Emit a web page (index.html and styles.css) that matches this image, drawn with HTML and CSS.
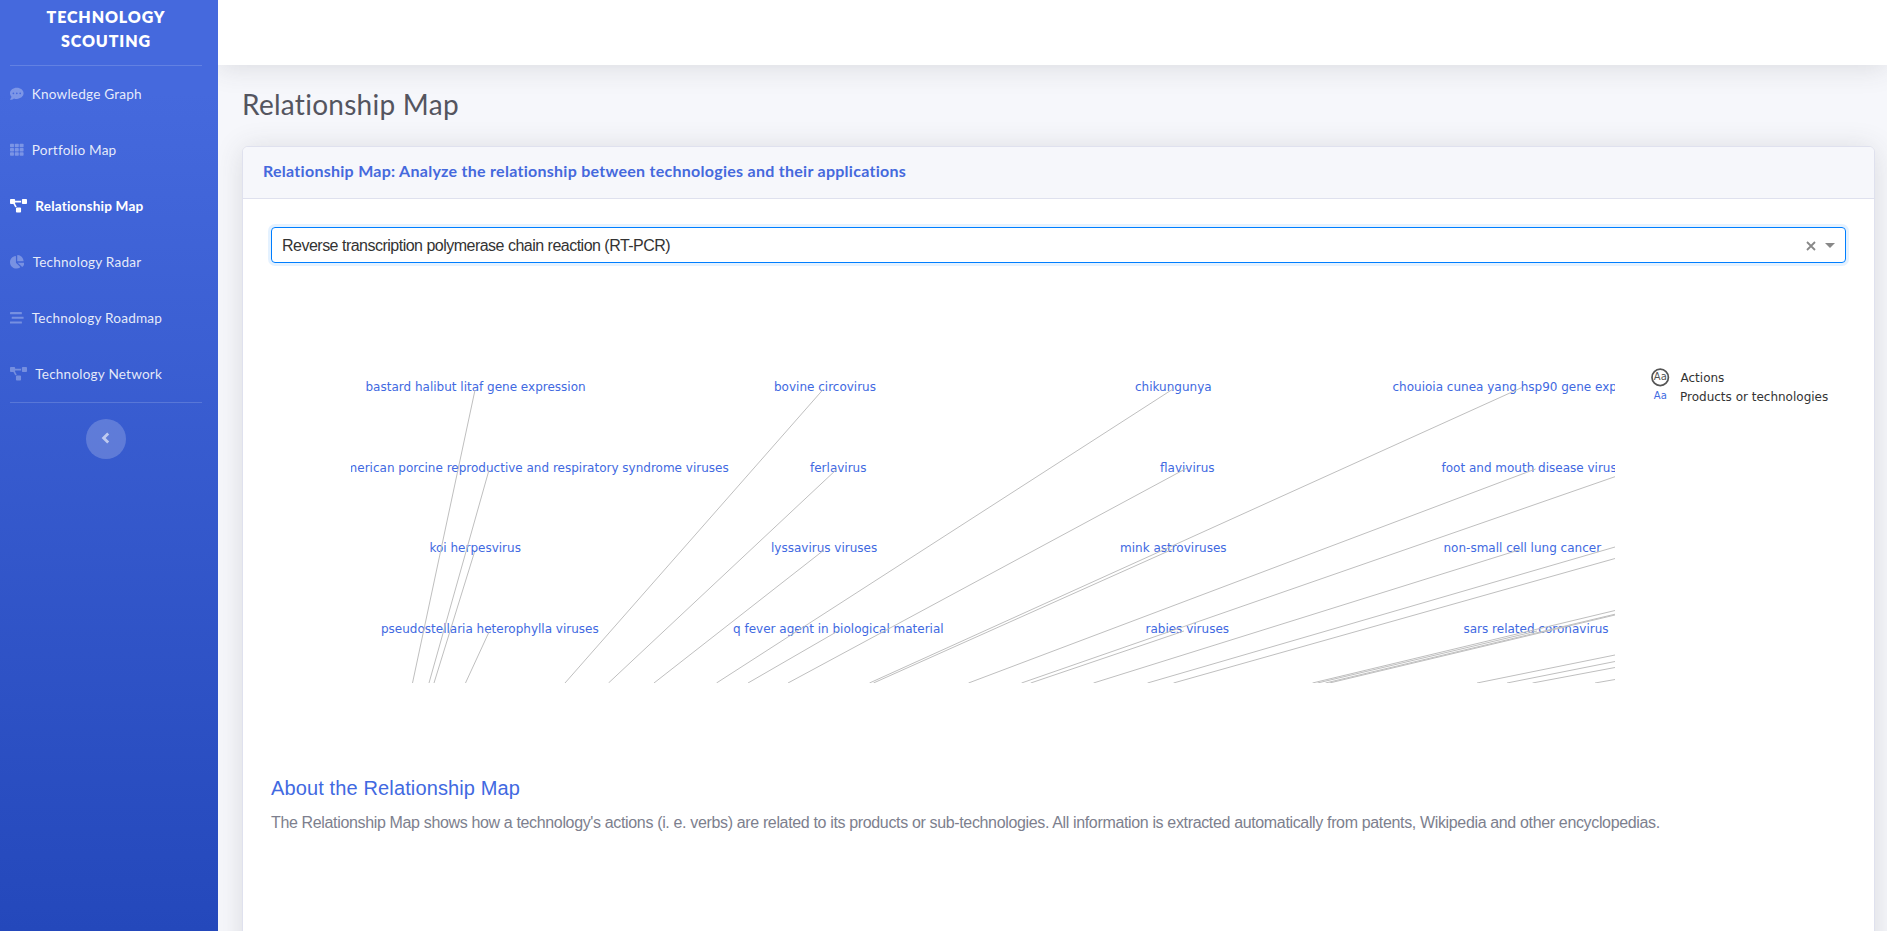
FILE: index.html
```
<!DOCTYPE html>
<html lang="en">
<head>
<meta charset="utf-8">
<title>Technology Scouting</title>
<link rel="stylesheet" href="styles.css">
</head>
<body>
<div class="app">
  <nav class="sidebar">
    <div class="brand">TECHNOLOGY<br>SCOUTING</div>
    <hr class="divider">
    <a class="nav-item"><svg class="icon" width="13.6" height="13.6" viewBox="0 0 512 512"><path d="M256 32C114.6 32 0 125.1 0 240c0 49.6 21.4 95 57 130.7C44.5 421.1 2.7 466 2.2 466.5c-2.2 2.3-2.8 5.7-1.5 8.7S4.8 480 8 480c66.3 0 116-31.8 140.6-51.4 32.7 12.3 69 19.4 107.4 19.4 141.4 0 256-93.1 256-208S397.4 32 256 32zM128 272a32 32 0 1 1 0-64 32 32 0 0 1 0 64zm128 0a32 32 0 1 1 0-64 32 32 0 0 1 0 64zm128 0a32 32 0 1 1 0-64 32 32 0 0 1 0 64z"/></svg><span>Knowledge Graph</span></a>
    <a class="nav-item"><svg class="icon" width="13.6" height="13.6" viewBox="0 0 512 512"><rect x="0" y="32" width="149" height="128" rx="24"/><rect x="181" y="32" width="150" height="128" rx="24"/><rect x="363" y="32" width="149" height="128" rx="24"/><rect x="0" y="192" width="149" height="128" rx="24"/><rect x="181" y="192" width="150" height="128" rx="24"/><rect x="363" y="192" width="149" height="128" rx="24"/><rect x="0" y="352" width="149" height="128" rx="24"/><rect x="181" y="352" width="150" height="128" rx="24"/><rect x="363" y="352" width="149" height="128" rx="24"/></svg><span>Portfolio Map</span></a>
    <a class="nav-item active"><svg class="icon" width="17" height="13.6" viewBox="0 0 640 512"><path d="M384 320H256c-17.67 0-32 14.33-32 32v128c0 17.67 14.33 32 32 32h128c17.67 0 32-14.33 32-32V352c0-17.67-14.33-32-32-32zM192 32c0-17.67-14.33-32-32-32H32C14.33 0 0 14.33 0 32v128c0 17.67 14.33 32 32 32h95.72l73.16 128.04C211.98 300.98 232.4 288 256 288h.28L192 175.51V128h224V64H192V32zM608 0H480c-17.67 0-32 14.33-32 32v128c0 17.67 14.33 32 32 32h128c17.67 0 32-14.33 32-32V32c0-17.67-14.33-32-32-32z"/></svg><span>Relationship Map</span></a>
    <a class="nav-item"><svg class="icon" width="14.45" height="13.6" viewBox="0 0 544 512"><path d="M527.79 288H290.5l158.03 158.03c6.04 6.04 15.98 6.53 22.19.68 38.7-36.46 65.32-85.61 73.13-140.86 1.34-9.46-6.51-17.85-16.06-17.85zm-15.83-64.8C503.72 103.74 408.26 8.28 288.8.04 279.68-.59 272 7.1 272 16.24V240h223.77c9.14 0 16.82-7.68 16.19-16.8zM224 288V50.71c0-9.55-8.39-17.4-17.84-16.06C86.99 51.49-4.1 155.6.14 280.37 4.5 408.51 114.83 513.59 243.03 511.98c50.4-.63 96.97-16.87 135.26-44.03 7.9-5.6 8.42-17.23 1.57-24.08L224 288z"/></svg><span>Technology Radar</span></a>
    <a class="nav-item"><svg class="icon" width="13.6" height="13.6" viewBox="0 0 512 512"><rect x="0" y="40" width="448" height="80" rx="14"/><rect x="64" y="216" width="448" height="80" rx="14"/><rect x="0" y="392" width="448" height="80" rx="14"/></svg><span>Technology Roadmap</span></a>
    <a class="nav-item"><svg class="icon" width="17" height="13.6" viewBox="0 0 640 512"><path d="M384 320H256c-17.67 0-32 14.33-32 32v128c0 17.67 14.33 32 32 32h128c17.67 0 32-14.33 32-32V352c0-17.67-14.33-32-32-32zM192 32c0-17.67-14.33-32-32-32H32C14.33 0 0 14.33 0 32v128c0 17.67 14.33 32 32 32h95.72l73.16 128.04C211.98 300.98 232.4 288 256 288h.28L192 175.51V128h224V64H192V32zM608 0H480c-17.67 0-32 14.33-32 32v128c0 17.67 14.33 32 32 32h128c17.67 0 32-14.33 32-32V32c0-17.67-14.33-32-32-32z"/></svg><span>Technology Network</span></a>
    <hr class="divider">
    <button class="toggle" aria-label="Collapse"><svg width="10" height="12" viewBox="0 0 10 12"><path d="M7.2 1.4L2.6 6l4.6 4.6" /></svg></button>
  </nav>
  <div class="main">
    <header class="topbar"></header>
    <div class="content">
      <h1 class="page-title">Relationship Map</h1>
      <section class="card">
        <h2 class="card-header">Relationship Map: Analyze the relationship between technologies and their applications</h2>
        <div class="card-body">
          <div class="select">
            <span class="select-value">Reverse transcription polymerase chain reaction (RT-PCR)</span>
            <svg class="clear" width="10" height="10" viewBox="0 0 10 10"><path d="M1 1l8 8M9 1l-8 8"/></svg>
            <svg class="arrow" width="10" height="5" viewBox="0 0 10 5"><path d="M0 0h10L5 5z"/></svg>
          </div>
          <div class="chart">
            <svg class="graph" width="1264" height="320" viewBox="351 363 1264 320">
              <g class="labels">
                <text x="365.5" y="391">bastard halibut litaf gene expression</text>
                <text x="774" y="391">bovine circovirus</text>
                <text x="1135" y="391">chikungunya</text>
                <text x="1392.5" y="391">chouioia cunea yang hsp90 gene expression</text>
                <text x="728.7" y="472" text-anchor="end">north american porcine reproductive and respiratory syndrome viruses</text>
                <text x="810" y="472">ferlavirus</text>
                <text x="1160" y="472">flavivirus</text>
                <text x="1441.5" y="472">foot and mouth disease virus</text>
                <text x="429.5" y="552">koi herpesvirus</text>
                <text x="771" y="552">lyssavirus viruses</text>
                <text x="1120" y="552">mink astroviruses</text>
                <text x="1443.5" y="552">non-small cell lung cancer</text>
                <text x="381" y="633">pseudostellaria heterophylla viruses</text>
                <text x="733" y="633">q fever agent in biological material</text>
                <text x="1145.5" y="633">rabies viruses</text>
                <text x="1463.5" y="633">sars related coronavirus</text>
              </g>
              <path class="edges" d="M475 390L412.5 683M489 470L429 683M474.5 552L434 683M489 632L465.5 683M823.5 389L565 683M837 469L608.5 683M824 550L654 683M1173 389L716.5 683M838 631L748 683M1187 468L788 683M1522 387.5L869.5 683M1173 549L873.5 683M1535.5 469L968.5 683M1615 476.7L1021.5 683M1184 631L1030.7 683M1522 549L1093.5 683M1615 547L1147.5 683M1615 558.5L1173.5 683M1615 610.5L1312.5 683M1537 631L1317.5 683M1615 614.2L1325.5 683M1615 615L1329.5 683M1615 655L1477 683M1615 661.5L1507 683M1615 667.5L1532.5 683M1615 679.5L1595 683"/>
            </svg>
            <svg class="legend" width="190" height="50" viewBox="1650 363 190 50">
              <circle cx="1660.2" cy="377.4" r="8.2"/>
              <text class="key" x="1653.8" y="380.3">Aa</text>
              <text class="key product" x="1653.8" y="399.3">Aa</text>
              <text x="1680.5" y="382">Actions</text>
              <text x="1680" y="401">Products or technologies</text>
            </svg>
          </div>
          <h3 class="about-title">About the Relationship Map</h3>
          <p class="about-text">The Relationship Map shows how a technology's actions (i. e. verbs) are related to its products or sub-technologies. All information is extracted automatically from patents, Wikipedia and other encyclopedias.</p>
        </div>
      </section>
    </div>
  </div>
</div>
</body>
</html>
```
FILE: styles.css
```
* { box-sizing: border-box; }
body { margin: 0; overflow: hidden; font-family: Lato, sans-serif; background: #f6f7fb; }
h1, h2, h3, p { margin: 0; font-weight: 400; }
.app { display: flex; width: 1887px; height: 931px; overflow: hidden; }

.sidebar {
  display: flex; flex-direction: column; flex: none;
  width: 218px; padding: 5px 16px 0 10px;
  background: linear-gradient(180deg, #4569dd 10%, #2448bb 100%);
  color: #fff;
}
.brand { height: 60px; text-align: center; font-size: 16px; font-weight: 800; line-height: 24px; letter-spacing: .87px; }
.divider { width: 100%; height: 1px; margin: 0; border: 0; background: rgba(255,255,255,.16); }
.nav-item {
  display: flex; align-items: center; gap: 8.2px; height: 56px;
  font-size: 13.6px; line-height: 20px; letter-spacing: .2px; color: rgba(255,255,255,.88);
}
.nav-item .icon { fill: rgba(255,255,255,.3); flex: none; }
.nav-item.active { color: #fff; font-weight: 700; }
.nav-item.active .icon { fill: #fff; }
.toggle {
  display: flex; align-items: center; justify-content: center; align-self: center;
  width: 40px; height: 40px; margin-top: 16px; padding: 0 1px 2px 0;
  border: 0; border-radius: 50%; background: rgba(255,255,255,.2);
}
.toggle path { fill: none; stroke: rgba(255,255,255,.6); stroke-width: 2.8; }

.main { display: flex; flex: 1; flex-direction: column; min-width: 0; overflow: hidden; }
.topbar { flex: none; height: 65px; background: #fff; box-shadow: 0 2.4px 28px rgba(58,59,69,.15); }
.content { flex: 1; padding: 23px 12px 0 24px; }
.page-title { height: 58px; font-size: 28px; line-height: 33px; letter-spacing: .27px; color: #54555f; }
.card {
  height: 1000px; border: 1px solid #dfe1ee; border-radius: 6px;
  background: #fff; box-shadow: 0 2.4px 28px rgba(58,59,69,.15);
}
.card-header {
  height: 52px; padding: 14px 20px; border-bottom: 1px solid #dfe1ee; border-radius: 5px 5px 0 0;
  background: #f6f7fb; color: #4569dd; font-size: 16px; font-weight: 700; line-height: 19px; letter-spacing: .272px;
}
.card-body { padding: 28px; font-family: "Liberation Sans", Arial, sans-serif; }
.select {
  display: flex; align-items: center; height: 36px; padding: 1px 10px 0;
  border: 1px solid #007eff; border-radius: 4px;
  box-shadow: 0 0 0 3px rgba(0,126,255,.1);
}
.select-value { flex: 1; font-size: 16px; letter-spacing: -.51px; color: #333; }
.clear { margin-right: 9px; }
.clear path { stroke: #888; stroke-width: 1.8; }
.arrow path { fill: #888; }

.chart { display: flex; align-items: flex-start; gap: 35px; height: 420px; padding: 100px 0 0 80px; }
.graph, .legend { flex: none; }
.chart text { font: 12px "DejaVu Sans", Verdana, sans-serif; fill: #333; }
.labels text { fill: #4169e1; }
.edges { fill: none; stroke: #bfbfbf; stroke-width: 1; }
.legend circle { fill: none; stroke: #555; stroke-width: 1.7; }
.chart .key { font-size: 10px; fill: #555; }
.chart .product { fill: #4169e1; }

.about-title { margin-top: 93px; font-size: 20px; line-height: 24px; letter-spacing: .13px; color: #4169e1; }
.about-text { margin-top: 11px; font-size: 16px; line-height: 24px; letter-spacing: -.35px; white-space: nowrap; color: #7d7f8e; }
```
